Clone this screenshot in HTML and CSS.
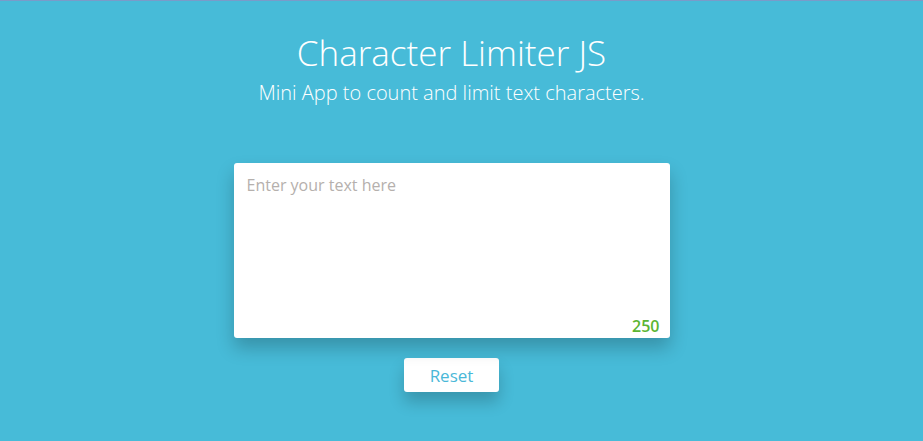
FILE: index.html
```html
<!DOCTYPE html>
<html lang="en">
<head>
<meta charset="utf-8">
<title>Character Limiter JS</title>
<link rel="stylesheet" href="styles.css">
</head>
<body>
<main class="app">
  <h1 class="title">Character Limiter JS</h1>
  <p class="subtitle">Mini App to count and limit text characters.</p>
  <div class="editor">
    <textarea class="input" placeholder="Enter your text here" maxlength="250"></textarea>
    <span class="counter">250</span>
  </div>
  <button class="reset" type="button">Reset</button>
</main>
</body>
</html>
```
FILE: styles.css
```css
html, body {
  margin: 0;
  padding: 0;
}
body {
  background: #47bbd8;
  border-top: 1px solid #7a9bc9;
  height: 440px;
  font-family: "Open Sans", "Liberation Sans", sans-serif;
  color: #fff;
}
.app {
  display: flex;
  flex-direction: column;
  align-items: center;
  padding-right: 20px;
}
.title {
  margin: 30px 0 0;
  font-size: 35px;
  font-weight: 300;
  line-height: 44px;
}
.subtitle {
  margin: 5px 0 0;
  font-size: 20px;
  font-weight: 300;
  line-height: 26px;
}
.editor {
  position: relative;
  margin-top: 57px;
  width: 436px;
  height: 175px;
  background: #fff;
  border-radius: 3px;
  box-shadow: 0 10px 18px rgba(0, 0, 0, 0.22);
}
.input {
  box-sizing: border-box;
  display: block;
  width: 100%;
  height: 100%;
  border: none;
  outline: none;
  resize: none;
  background: transparent;
  padding: 11px 13px;
  font-family: inherit;
  font-size: 16px;
  color: #555;
}
.input::placeholder {
  color: #b5b0ad;
}
.counter {
  position: absolute;
  right: 10px;
  bottom: 1px;
  font-size: 16px;
  font-weight: 600;
  color: #5cb532;
}
.reset {
  margin-top: 20px;
  width: 95px;
  height: 34px;
  border: none;
  border-radius: 3px;
  background: #fff;
  color: #4ab8d8;
  font-family: inherit;
  font-size: 17px;
  cursor: pointer;
  box-shadow: 0 10px 16px rgba(0, 0, 0, 0.2);
}
```
